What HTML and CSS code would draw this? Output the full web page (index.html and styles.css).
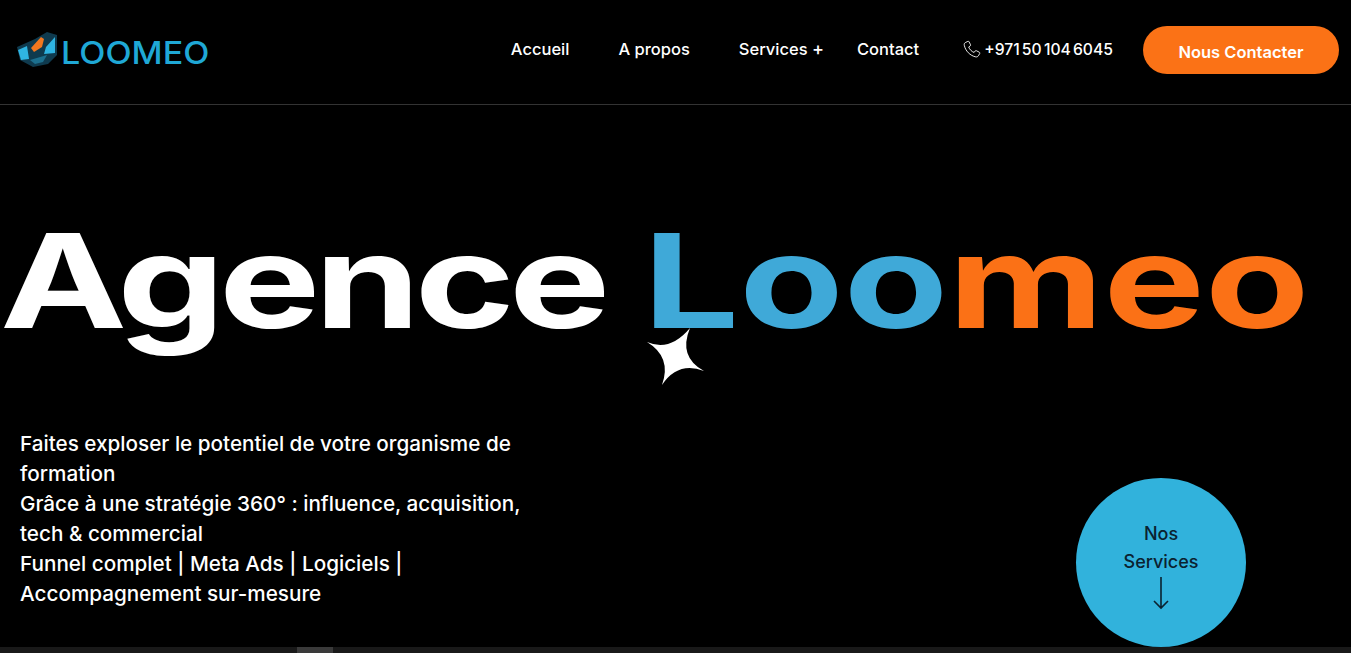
FILE: index.html
```html
<!DOCTYPE html>
<html lang="en">
<head>
    <meta charset="UTF-8">
    <meta name="viewport" content="width=device-width, initial-scale=1.0">
    <title>Agence Loomeo</title>
    <link rel="stylesheet" href="styles.css">
</head>
<body>
    <header class="site-header">
        <a class="logo" href="#">
            <svg class="logo-mark" viewBox="0 0 44 36" width="44" height="36">
                <path fill="#0f3a4e" d="M1 16 L19 8 L31 1 L41 4 L41 24 L32 33 L17 36 L4 29 Z"/>
                <path fill="#2fb4e2" d="M2 19 L11 15 L13 28 L5 29 Z"/>
                <path fill="#f2771f" d="M15 17 L25 6 L28 8 L26 16 L18 21 Z"/>
                <path fill="#2fb4e2" d="M30 16 L39 6 L39 22 L28 23 Z"/>
                <path fill="#1c6f8e" d="M14 29 L31 24 L27 31 L19 33 Z"/>
            </svg>
            <span class="logo-text">LOOMEO</span>
        </a>
        <nav class="main-nav">
            <a href="#">Accueil</a>
            <a href="#">A propos</a>
            <a class="has-sub" href="#">Services <span class="plus">+</span></a>
            <a href="#">Contact</a>
        </nav>
        <a class="phone" href="#">
            <svg viewBox="0 0 24 24" width="18" height="18" fill="none" stroke="#fff" stroke-width="1.2">
                <path d="M3 3.5 L6.5 1.8 C7.2 1.5 7.8 1.8 8.1 2.4 L10 6.3 C10.3 7 10.1 7.6 9.5 8 L7.6 9.3 C8.8 12.6 11.5 15.4 14.8 16.6 L16.2 14.7 C16.6 14.1 17.3 14 17.9 14.3 L21.7 16.3 C22.4 16.7 22.6 17.3 22.3 18 L20.5 21 C19.8 22.2 18.5 22.8 17 22.5 C9.5 21 3.2 14.5 1.7 7 C1.4 5.5 1.9 4.1 3 3.5 Z"/>
            </svg>
            <span>+971 50 104 6045</span>
        </a>
        <a class="btn-contact" href="#">Nous Contacter</a>
    </header>

    <main class="hero">
        <h1 class="hero-title">Agence <span class="blue">Loo</span><span class="orange">meo</span></h1>
        <svg class="star" viewBox="0 0 60 60" width="60" height="60">
            <path fill="#fff" d="M1 15 Q24 25 44 1 Q32 30 58 44 Q32 34 16 58 Q26 30 1 15 Z"/>
        </svg>
        <div class="hero-row">
            <p class="hero-text">
                Faites exploser le potentiel de votre organisme de formation<br>
                Grâce à une stratégie 360° : influence, acquisition, tech &amp; commercial<br>
                Funnel complet | Meta Ads | Logiciels | Accompagnement sur-mesure
            </p>
            <a class="circle-btn" href="#">
                <span>Nos</span>
                <span>Services</span>
                <svg viewBox="0 0 18 34" width="18" height="34" fill="none" stroke="#0b2230" stroke-width="1.6">
                    <path d="M9 1 V32 M2 25 L9 32 L16 25"/>
                </svg>
            </a>
        </div>
    </main>

    <div class="bottom-strip"><div class="strip-thumb"></div></div>
</body>
</html>
```

FILE: styles.css
```css
/* page */
* {
    box-sizing: border-box;
}

html, body {
    height: 100%;
}

body {
    margin: 0;
    display: flex;
    flex-direction: column;
    overflow: hidden;
    background-color: #000;
    color: #fff;
    font-family: Inter, "Liberation Sans", sans-serif;
}

a {
    color: inherit;
    text-decoration: none;
}

/* header */
.site-header {
    display: flex;
    align-items: center;
    height: 105px;
    padding: 0 12px 6px 16px;
    border-bottom: 1px solid #333;
}

.logo {
    display: flex;
    align-items: center;
    gap: 1px;
}

.logo-text {
    padding-top: 6px;
    color: #1fa8d6;
    font-size: 31px;
    font-weight: 500;
    line-height: 1;
    transform: scaleX(1.1);
    transform-origin: left center;
}

.main-nav {
    display: flex;
    align-items: center;
    gap: 49px;
    margin-left: auto;
    font-size: 16.5px;
    font-weight: 450;
}

.main-nav .has-sub {
    margin-right: -16px;
}

.plus {
    font-size: 18px;
    line-height: 1;
}

.phone {
    display: flex;
    align-items: center;
    gap: 3px;
    margin-left: 44px;
    font-size: 15.7px;
    font-weight: 450;
    word-spacing: -2px;
}

.btn-contact {
    display: flex;
    align-items: center;
    justify-content: center;
    width: 196px;
    height: 48px;
    margin-left: 30px;
    margin-top: 2px;
    padding-top: 4px;
    border-radius: 24px;
    background-color: #fb7216;
    font-size: 16.5px;
    font-weight: 600;
}

/* hero */
.hero {
    flex: 1;
    position: relative;
    display: flex;
    flex-direction: column;
    justify-content: space-between;
    min-height: 0;
}

.hero-title {
    align-self: flex-start;
    margin: 0;
    padding-top: 101px;
    font-size: 130px;
    font-weight: 700;
    letter-spacing: -4.5px;
    word-spacing: 3px;
    line-height: 150px;
    white-space: nowrap;
    transform: scaleX(1.31);
    transform-origin: left top;
}

.blue {
    color: #3fa9d8;
    letter-spacing: 0;
}

.orange {
    color: #fb7116;
    letter-spacing: 0;
}

.star {
    position: absolute;
    left: 646px;
    top: 222px;
}

.hero-row {
    display: flex;
    justify-content: space-between;
    align-items: flex-end;
    padding: 0 105px 0 20px;
}

.hero-text {
    width: 530px;
    margin: 0 0 38px;
    font-size: 20.7px;
    font-weight: 450;
    line-height: 30px;
}

.circle-btn {
    display: flex;
    flex-direction: column;
    align-items: center;
    justify-content: center;
    width: 170px;
    height: 169px;
    padding-top: 4px;
    border-radius: 50%;
    background-color: #31b2dc;
    color: #0b2230;
    font-size: 18px;
    font-weight: 450;
    line-height: 28px;
}

/* strip at the bottom of the window */
.bottom-strip {
    height: 6px;
    padding-left: 297px;
    background-color: #191919;
}

.strip-thumb {
    width: 36px;
    height: 6px;
    background-color: #3a3a3a;
}
```
